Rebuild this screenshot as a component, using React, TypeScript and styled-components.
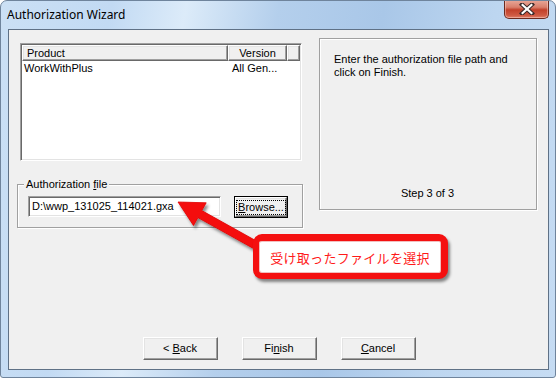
import { FC } from "react";
import styled, { createGlobalStyle } from "styled-components";

const GlobalStyle = createGlobalStyle`
  html, body {
    margin: 0;
    padding: 0;
    background: #ffffff;
  }
`;

const uiFont = `"Liberation Sans", Arial, sans-serif`;

const Window = styled.div`
  position: relative;
  width: 556px;
  height: 378px;
  box-sizing: border-box;
  display: flex;
  flex-direction: column;
  border: 1px solid #6f849c;
  border-radius: 7px 7px 3px 3px;
  background: linear-gradient(
    100deg,
    #cbe0f5 0%,
    #c2daf3 18%,
    #dcebf9 30%,
    #b4cfec 45%,
    #a9c7e8 62%,
    #bdd6f0 80%,
    #c6dcf3 100%
  );
  overflow: hidden;
`;

const TitleBar = styled.div`
  height: 28px;
  display: flex;
  align-items: flex-start;
  padding-left: 6px;
`;

const TitleText = styled.span`
  font-family: "Noto Sans", "Segoe UI", sans-serif;
  font-size: 12px;
  line-height: 28px;
  color: #000000;
`;

const CloseButton = styled.div`
  margin-left: auto;
  margin-right: 6px;
  margin-top: -1px;
  width: 45px;
  height: 19px;
  box-sizing: border-box;
  border: 1px solid #6b2a1f;
  border-top: none;
  border-radius: 0 0 5px 5px;
  background: linear-gradient(
    180deg,
    #e9a99a 0%,
    #d97f6c 40%,
    #c2402a 55%,
    #cf5a43 85%,
    #e0806a 100%
  );
  box-shadow: inset 0 0 0 1px rgba(255, 220, 210, 0.45);
  display: flex;
  align-items: center;
  justify-content: center;
`;

const Client = styled.div`
  flex: 1;
  margin: 0 6px 7px 7px;
  box-sizing: border-box;
  border: 1px solid #5f7186;
  background: #f0f0f0;
  display: flex;
  flex-direction: column;
  font-family: ${uiFont};
  font-size: 11px;
  color: #000000;
`;

const TopRow = styled.div`
  display: flex;
  align-items: flex-start;
  gap: 16px;
  padding: 8px 11px 0 8px;
`;

const LeftColumn = styled.div`
  width: 286px;
  margin-top: 5px;
  display: flex;
  flex-direction: column;
`;

const sunken = `
  border: 1px solid;
  border-color: #a0a0a0 #ffffff #ffffff #a0a0a0;
  box-shadow: inset 1px 1px 0 #696969, inset -1px -1px 0 #e3e3e3;
`;

const raised = `
  border: 1px solid;
  border-color: #ffffff #696969 #696969 #ffffff;
  box-shadow: inset -1px -1px 0 #a0a0a0, inset 1px 1px 0 #e3e3e3;
`;

const ListView = styled.div`
  margin: 0 1px 0 3px;
  height: 118px;
  box-sizing: border-box;
  ${sunken}
  padding: 1px;
  background: #ffffff;
`;

const HeaderRow = styled.div`
  display: flex;
  height: 16px;
`;

const HeaderCell = styled.div<{ $width: number; $align?: string }>`
  width: ${(p) => p.$width}px;
  flex: none;
  box-sizing: border-box;
  ${raised}
  background: #f0f0f0;
  line-height: 14px;
  padding: 0 4px;
  text-align: ${(p) => p.$align || "left"};
  white-space: nowrap;
  overflow: hidden;
`;

const DataRow = styled.div`
  display: flex;
  height: 14px;
  line-height: 14px;
`;

const DataCell = styled.div<{ $width: number; $pad: number }>`
  width: ${(p) => p.$width}px;
  flex: none;
  padding-left: ${(p) => p.$pad}px;
  box-sizing: border-box;
  white-space: nowrap;
`;

const GroupBox = styled.fieldset`
  margin: 17px 0 0;
  padding: 5px 14px 9px 10px;
  border: 1px solid #a0a0a0;
  box-shadow: inset 1px 1px 0 #ffffff, 1px 1px 0 #ffffff;
  display: flex;
  align-items: flex-start;
  gap: 13px;
  min-width: 0;
`;

const GroupLabel = styled.legend`
  margin-left: -4px;
  padding: 0 2px;
  line-height: 13px;
  background: #f0f0f0;
`;

const TextField = styled.div`
  width: 193px;
  height: 21px;
  box-sizing: border-box;
  ${sunken}
  background: #ffffff;
  padding: 0 3px;
  line-height: 19px;
  white-space: nowrap;
`;

const BrowseButton = styled.div`
  width: 54px;
  height: 22px;
  box-sizing: border-box;
  border: 1px solid #000000;
  display: flex;
`;

const BrowseInner = styled.div`
  flex: 1;
  ${raised}
  display: flex;
  align-items: center;
  justify-content: center;
`;

const FocusRect = styled.span`
  outline: 1px dotted #000000;
  outline-offset: 0;
  padding: 0 1px;
  line-height: 13px;
`;

const InfoPanel = styled.div`
  width: 218px;
  height: 172px;
  box-sizing: border-box;
  border: 1px solid #a0a0a0;
  box-shadow: inset 1px 1px 0 #ffffff, 1px 1px 0 #ffffff;
  display: flex;
  flex-direction: column;
  justify-content: space-between;
  padding: 14px 15px 9px 14px;
  line-height: 13px;
`;

const StepText = styled.div`
  text-align: center;
`;

const ButtonRow = styled.div`
  margin-top: auto;
  display: flex;
  justify-content: center;
  gap: 24px;
  padding: 0 0 9px 1px;
`;

const DialogButton = styled.div`
  width: 75px;
  height: 23px;
  box-sizing: border-box;
  ${raised}
  display: flex;
  align-items: center;
  justify-content: center;
  line-height: 13px;
  white-space: pre;
`;

const Callout = styled.div`
  position: absolute;
  left: 252px;
  top: 233px;
  width: 195px;
  height: 45px;
  box-sizing: border-box;
  border: 6px solid #f41010;
  border-top-width: 7px;
  border-right-width: 7px;
  border-radius: 9px;
  background: #ffffff;
  box-shadow: 2px 3px 3px rgba(0, 0, 0, 0.45),
    inset 0 0 0 1px rgba(200, 0, 0, 0.25);
  display: flex;
  align-items: center;
  justify-content: center;
  font-family: "Noto Sans CJK JP", sans-serif;
  font-size: 13px;
  color: #ff1a1a;
  letter-spacing: 0.3px;
`;

const ArrowLayer = styled.svg`
  position: absolute;
  left: 0;
  top: 0;
  pointer-events: none;
`;

const CloseGlyph: FC = () => (
  <svg width="16" height="12" viewBox="0 0 16 12">
    <path
      d="M3 1.5 L13 10.5 M13 1.5 L3 10.5"
      stroke="#3b2a2a"
      strokeWidth="4.2"
      strokeLinecap="square"
    />
    <path
      d="M3.6 2 L12.4 10 M12.4 2 L3.6 10"
      stroke="#ffffff"
      strokeWidth="2.2"
      strokeLinecap="square"
    />
  </svg>
);

// arrow from callout up to the file field
const tip = { x: 177, y: 201 };
const tail = { x: 258, y: 246 };
const dx = tail.x - tip.x;
const dy = tail.y - tip.y;
const len = Math.hypot(dx, dy);
const ux = dx / len;
const uy = dy / len;
const nx = -uy;
const ny = ux;
const headLen = 25;
const headHalf = 13;
const shaftHalf = 4;
const bx = tip.x + ux * headLen;
const by = tip.y + uy * headLen;
const pts = [
  [tip.x, tip.y],
  [bx + nx * headHalf, by + ny * headHalf],
  [bx + nx * shaftHalf, by + ny * shaftHalf],
  [tail.x + nx * shaftHalf, tail.y + ny * shaftHalf],
  [tail.x - nx * shaftHalf, tail.y - ny * shaftHalf],
  [bx - nx * shaftHalf, by - ny * shaftHalf],
  [bx - nx * headHalf, by - ny * headHalf],
]
  .map((p) => p.map((v) => v.toFixed(1)).join(","))
  .join(" ");

const App: FC = () => {
  return (
    <>
      <GlobalStyle />
      <Window>
        <TitleBar>
          <TitleText>Authorization Wizard</TitleText>
          <CloseButton>
            <CloseGlyph />
          </CloseButton>
        </TitleBar>
        <Client>
          <TopRow>
            <LeftColumn>
              <ListView>
                <HeaderRow>
                  <HeaderCell $width={206}>Product</HeaderCell>
                  <HeaderCell $width={59} $align="center">
                    Version
                  </HeaderCell>
                  <HeaderCell $width={13} />
                </HeaderRow>
                <DataRow>
                  <DataCell $width={206} $pad={2}>
                    WorkWithPlus
                  </DataCell>
                  <DataCell $width={59} $pad={4}>
                    All Gen...
                  </DataCell>
                </DataRow>
              </ListView>
              <GroupBox>
                <GroupLabel>
                  Authorization <u>f</u>ile
                </GroupLabel>
                <TextField>D:\wwp_131025_114021.gxa</TextField>
                <BrowseButton>
                  <BrowseInner>
                    <FocusRect>
                      <u>B</u>rowse...
                    </FocusRect>
                  </BrowseInner>
                </BrowseButton>
              </GroupBox>
            </LeftColumn>
            <InfoPanel>
              <div>
                Enter the authorization file path and
                <br />
                click on Finish.
              </div>
              <StepText>Step 3 of 3</StepText>
            </InfoPanel>
          </TopRow>
          <ButtonRow>
            <DialogButton>
              {"< "}
              <u>B</u>ack
            </DialogButton>
            <DialogButton>
              Fi<u>n</u>ish
            </DialogButton>
            <DialogButton>
              <u>C</u>ancel
            </DialogButton>
          </ButtonRow>
        </Client>
        <ArrowLayer width="556" height="378" viewBox="0 0 556 378">
          <defs>
            <filter id="arrowShadow" x="-20%" y="-20%" width="140%" height="140%">
              <feDropShadow dx="2" dy="3" stdDeviation="1.6" floodColor="#000" floodOpacity="0.45" />
            </filter>
          </defs>
          <polygon
            points={pts}
            fill="#f41010"
            stroke="#e00000"
            strokeWidth="0.8"
            strokeLinejoin="round"
            filter="url(#arrowShadow)"
          />
        </ArrowLayer>
        <Callout>受け取ったファイルを選択</Callout>
      </Window>
    </>
  );
};

export default App;
